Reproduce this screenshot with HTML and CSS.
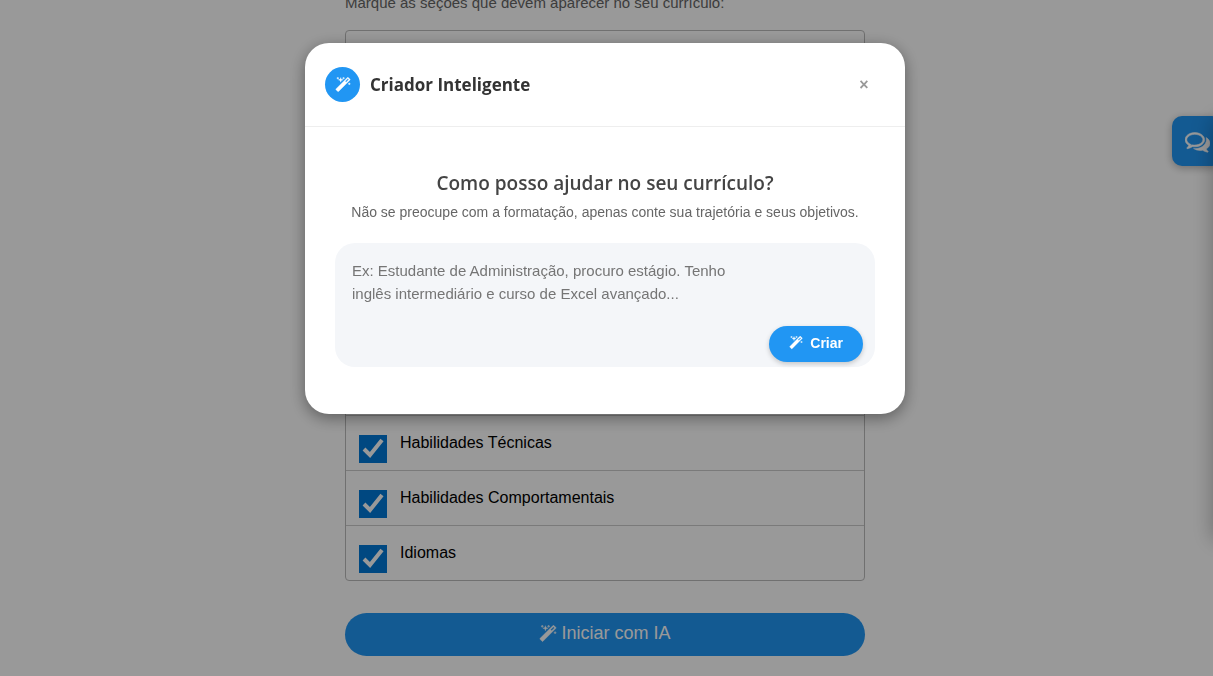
FILE: index.html
```html
<!DOCTYPE html>
<html lang="pt-BR">
<head>
  <meta charset="UTF-8" />
  <meta name="viewport" content="width=device-width, initial-scale=1.0" />
  <title>Criador de Currículo</title>
  <link rel="stylesheet" href="styles.css">
</head>
<body>

  <svg class="sprite" aria-hidden="true">
    <symbol id="icon-magic" viewBox="0 0 1792 1792">
      <path d="M1254 581l293-293-107-107-293 293zm447-293q0 27-18 45l-1286 1286q-18 18-45 18t-45-18l-198-198q-18-18-18-45t18-45l1286-1286q18-18 45-18t45 18l198 198q18 18 18 45zm-1351-190l98 30-98 30-30 98-30-98-98-30 98-30 30-98zm350 162l196 60-196 60-60 196-60-196-196-60 196-60 60-196zm930 478l98 30-98 30-30 98-30-98-98-30 98-30 30-98zm-640-640l98 30-98 30-30 98-30-98-98-30 98-30 30-98z"/>
    </symbol>
    <symbol id="icon-comments" viewBox="0 0 1792 1792">
      <path d="M704 384q-153 0-286 52t-211.500 141-78.500 191q0 82 53 158t149 132l97 56-35 84q34-20 62-39l44-31 53 10q78 14 153 14 153 0 286-52t211.500-141 78.500-191-78.500-191-211.500-141-286-52zm0-128q191 0 353.500 68.500t256.500 186.500 94 257-94 257-256.500 186.500-353.500 68.500q-86 0-176-16-124 88-278 128-36 9-86 16h-3q-11 0-20.500-8t-11.500-21q-1-3-1-6.500t.5-6.500 2-6l2.500-5 3.500-5.500 4-5 4.500-5 4-4.500q5-6 23-25t26-29.500 22.500-29 25-38.500 20.500-44q-124-72-195-177t-71-224q0-139 94-257t256.500-186.500 353.500-68.500zm822 1169q10 24 20.500 44t25 38.500 22.500 29 26 29.500 23 25q1 1 4 4.500t4.500 5 4 5 3.500 5.500l2.500 5 2 6 .5 6.500-1 6.500q-3 14-13 22t-22 7q-50-7-86-16-154-40-278-128-90 16-176 16-271 0-472-132 58 4 88 4 161 0 309-45t264-129q125-92 192-212t67-254q0-77-23-152 129 71 204 178t75 230q0 120-71 224.500t-195 176.500z"/>
    </symbol>
  </svg>

  <main class="container">
    <p class="intro">Marque as seções que devem aparecer no seu currículo:</p>

    <ul class="sections">
      <li><label><input type="checkbox" aria-label="Dados Pessoais" checked /></label></li>
      <li><label><input type="checkbox" aria-label="Objetivo" checked /></label></li>
      <li><label><input type="checkbox" aria-label="Resumo" checked /></label></li>
      <li><label><input type="checkbox" aria-label="Experiência" checked /></label></li>
      <li><label><input type="checkbox" aria-label="Formação" checked /></label></li>
      <li><label><input type="checkbox" aria-label="Cursos" checked /></label></li>
      <li><label><input type="checkbox" aria-label="Projetos" checked /></label></li>
      <li><label><input type="checkbox" checked /> Habilidades Técnicas</label></li>
      <li><label><input type="checkbox" checked /> Habilidades Comportamentais</label></li>
      <li><label><input type="checkbox" checked /> Idiomas</label></li>
    </ul>

    <button type="button" class="start-button">
      <svg class="icon"><use href="#icon-magic"/></svg>
      Iniciar com IA
    </button>
  </main>

  <!-- chat -->
  <button type="button" class="chat-button" aria-label="Chat">
    <svg class="icon"><use href="#icon-comments"/></svg>
  </button>
  <aside class="chat-panel"></aside>

  <!-- modal -->
  <div class="overlay">
    <div class="modal" role="dialog" aria-modal="true" aria-labelledby="modalTitle">
      <header class="modal-header">
        <span class="modal-badge"><svg class="icon"><use href="#icon-magic"/></svg></span>
        <h2 id="modalTitle">Criador Inteligente</h2>
        <button type="button" class="close-button" aria-label="Fechar">×</button>
      </header>
      <div class="modal-body">
        <label class="question" for="prompt">Como posso ajudar no seu currículo?</label>
        <p class="hint">Não se preocupe com a formatação, apenas conte sua trajetória e seus objetivos.</p>
        <div class="prompt-box">
          <textarea id="prompt" placeholder="Ex: Estudante de Administração, procuro estágio. Tenho inglês intermediário e curso de Excel avançado..."></textarea>
          <button type="button" class="create-button">
            <svg class="icon"><use href="#icon-magic"/></svg>
            Criar
          </button>
        </div>
      </div>
    </div>
  </div>

</body>
</html>
```
FILE: styles.css
```css
* {
  box-sizing: border-box;
}
body {
  margin: 0;
  padding-right: 3px;
  background: #fff;
  font-family: "Liberation Sans", Arial, sans-serif;
  font-size: 16px;
  color: #000;
  overflow: hidden;
}
button {
  font-family: inherit;
  border: none;
  color: #fff;
  background: #2196f3;
  cursor: pointer;
}
.sprite {
  display: none;
}
.icon {
  width: 14px;
  height: 14px;
  fill: currentColor;
  stroke: currentColor;
  stroke-width: 40px;
}
.container {
  max-width: 520px;
  margin: -6px auto 0;
}
.intro {
  margin: 0 0 18px;
  font-size: 15px;
  line-height: 18px;
  color: #666;
}
.sections {
  list-style: none;
  margin: 0 0 32px;
  padding: 0;
  border: 1px solid #bbb;
  border-radius: 4px;
}
.sections li {
  height: 55px;
  border-bottom: 1px solid #ccc;
}
.sections li:last-child {
  height: 54px;
  border-bottom: none;
}
.sections label {
  display: flex;
  gap: 13px;
  padding: 19px 13px 0;
  line-height: 16px;
}
.sections input {
  width: 28px;
  height: 28px;
  margin: 0;
  flex: none;
  appearance: none;
  background: #0078d7;
}
.sections input:checked {
  background: #0078d7 url("data:image/svg+xml,%3Csvg xmlns='http://www.w3.org/2000/svg' viewBox='0 0 28 28'%3E%3Cpath d='M5 14l6 6L23 5' fill='none' stroke='white' stroke-width='4'/%3E%3C/svg%3E");
}
.start-button {
  display: flex;
  align-items: center;
  justify-content: center;
  gap: 4px;
  width: 100%;
  height: 43px;
  padding: 0 6px 2px;
  border-radius: 22px;
  font-size: 18px;
}
.start-button .icon {
  width: 18px;
  height: 18px;
}
.chat-button {
  position: fixed;
  top: 116px;
  right: -9px;
  width: 50px;
  height: 50px;
  padding: 0;
  border-radius: 10px;
  box-shadow: 0 2px 8px rgba(0,0,0,0.3);
}
.chat-button .icon {
  display: block;
  width: 25px;
  height: 25px;
  margin: auto;
}
.chat-panel {
  position: fixed;
  top: 116px;
  right: -300px;
  width: 300px;
  height: 420px;
  box-shadow: 0 4px 20px rgba(0,0,0,0.3);
}
.overlay {
  position: fixed;
  inset: 0;
  padding: 43px 3px 0 0;
  background: rgba(0,0,0,0.4);
}
.modal {
  max-width: 600px;
  margin: 0 auto;
  background: #fff;
  border-radius: 24px;
  box-shadow: 0 4px 16px rgba(0,0,0,0.4);
}
.modal-header {
  display: flex;
  align-items: center;
  gap: 10px;
  padding: 24px 20px;
  border-bottom: 1px solid #eee;
}
.modal-badge {
  display: flex;
  align-items: center;
  justify-content: center;
  width: 35px;
  height: 35px;
  border-radius: 50%;
  background: #2196f3;
  color: #fff;
}
.modal-badge .icon {
  width: 16px;
  height: 16px;
}
.modal-header h2 {
  margin: 0;
  flex: 1;
  font-family: "Segoe UI", "Open Sans", sans-serif;
  font-size: 17px;
  font-weight: 700;
  line-height: 24px;
  color: #333;
}
.close-button {
  width: 42px;
  height: 30px;
  padding: 0;
  background: none;
  color: #999;
  font-size: 16px;
  font-weight: bold;
}
.modal-body {
  padding: 42px 30px 47px;
  text-align: center;
}
.question {
  display: block;
  font-family: "Segoe UI", "Open Sans", sans-serif;
  font-size: 19px;
  font-weight: 600;
  line-height: 28px;
  color: #444;
}
.hint {
  margin: 6px 0 22px;
  font-size: 14px;
  line-height: 18px;
  color: #666;
}
.prompt-box {
  position: relative;
  height: 124px;
  border-radius: 20px;
  background: #f4f6f9;
}
.prompt-box textarea {
  display: block;
  width: 100%;
  height: 100%;
  padding: 16px 130px 16px 17px;
  border: none;
  outline: none;
  resize: none;
  background: none;
  font-family: inherit;
  font-size: 15px;
  line-height: 23px;
}
.prompt-box textarea::placeholder {
  color: #757575;
}
.create-button {
  position: absolute;
  right: 12px;
  bottom: 5px;
  display: flex;
  align-items: center;
  gap: 7px;
  height: 36px;
  padding: 0 20px 2px;
  border-radius: 18px;
  font-size: 14px;
  font-weight: bold;
  box-shadow: 0 2px 5px rgba(0,0,0,0.2);
}
```
